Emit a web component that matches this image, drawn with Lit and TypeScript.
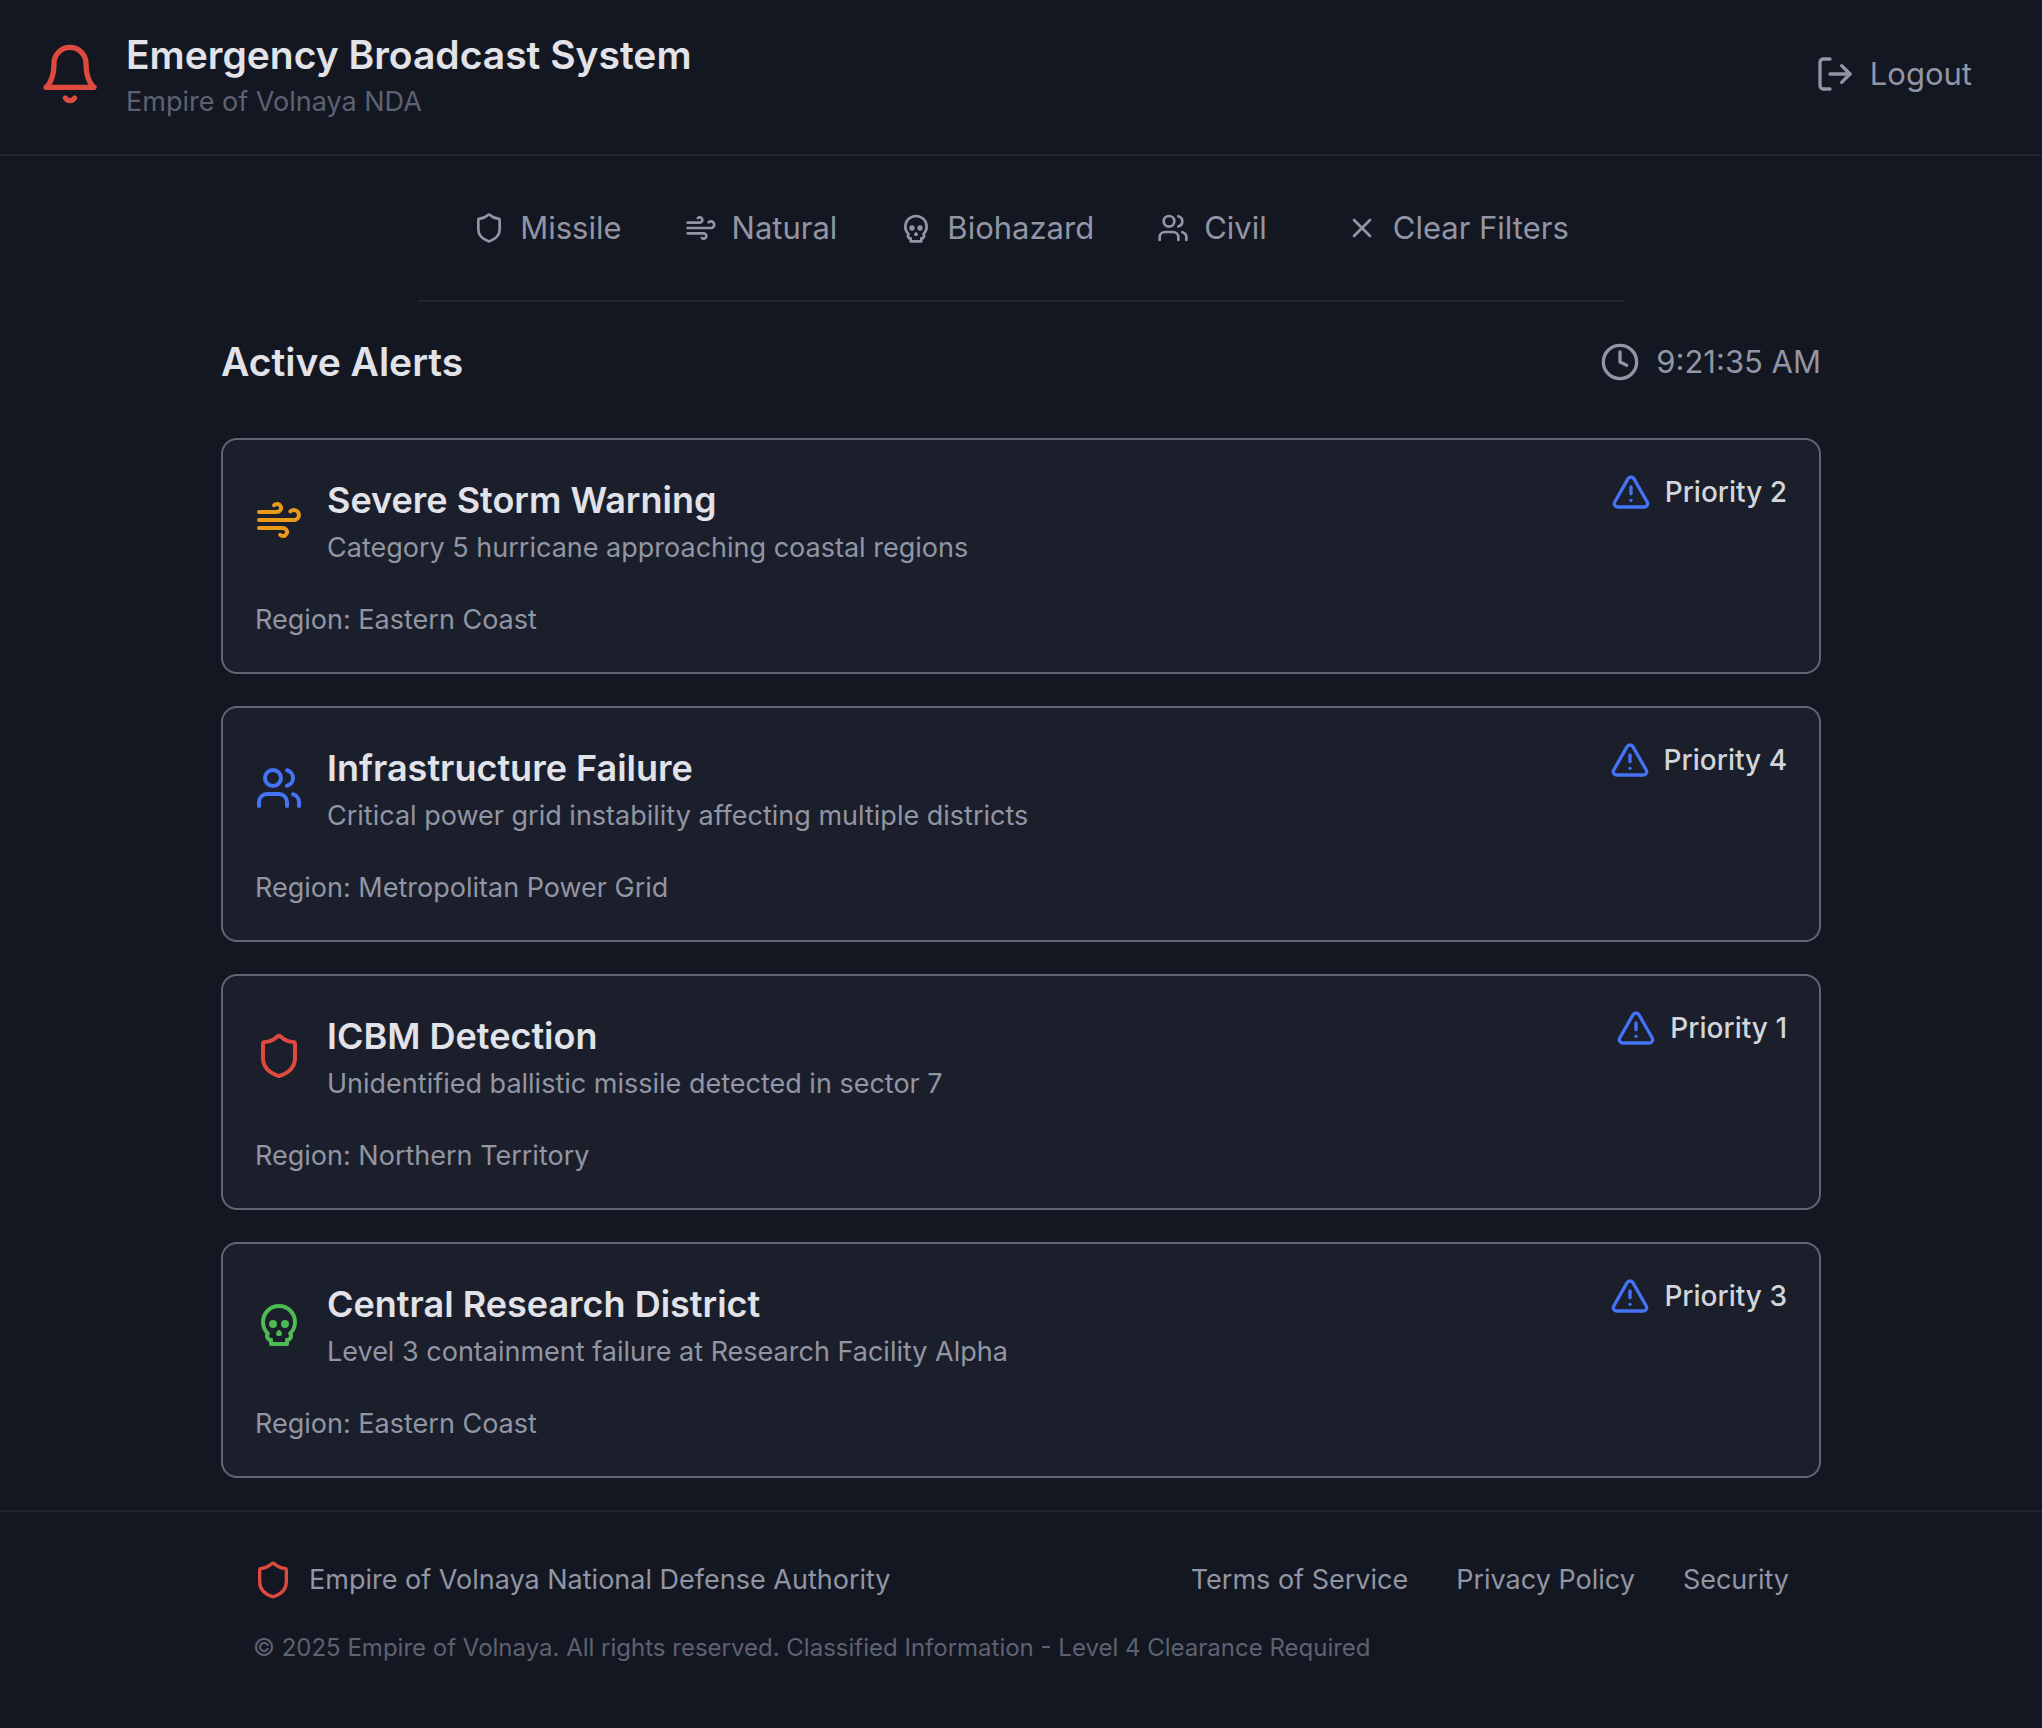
import { LitElement, html, css, svg, nothing } from "lit";
import type { SVGTemplateResult } from "lit";
import { customElement, property, state } from "lit/decorators.js";

type Kind = "missile" | "natural" | "biohazard" | "civil";

const glyphs: Record<string, SVGTemplateResult> = {
  bell: svg`<path d="M6 8a6 6 0 0 1 12 0c0 7 3 9 3 9H3s3-2 3-9"/><path d="M10.3 21a1.94 1.94 0 0 0 3.4 0"/>`,
  logout: svg`<path d="M9 21H5a2 2 0 0 1-2-2V5a2 2 0 0 1 2-2h4"/><path d="m16 17 5-5-5-5"/><path d="M21 12H9"/>`,
  missile: svg`<path d="M20 13c0 5-3.5 7.5-7.66 8.95a1 1 0 0 1-.67-.01C7.5 20.5 4 18 4 13V6a1 1 0 0 1 1-1c2 0 4.5-1.2 6.24-2.72a1.17 1.17 0 0 1 1.52 0C14.51 3.81 17 5 19 5a1 1 0 0 1 1 1z"/>`,
  natural: svg`<path d="M17.7 7.7a2.5 2.5 0 1 1 1.8 4.3H2"/><path d="M9.6 4.6A2 2 0 1 1 11 8H2"/><path d="M12.6 19.4A2 2 0 1 0 14 16H2"/>`,
  biohazard: svg`<circle cx="9" cy="12" r="1"/><circle cx="15" cy="12" r="1"/><path d="M8 20v2h8v-2"/><path d="m12.5 17-.5-1-.5 1h1z"/><path d="M16 20a2 2 0 0 0 1.56-3.25 8 8 0 1 0-11.12 0A2 2 0 0 0 8 20"/>`,
  civil: svg`<path d="M16 21v-2a4 4 0 0 0-4-4H6a4 4 0 0 0-4 4v2"/><circle cx="9" cy="7" r="4"/><path d="M22 21v-2a4 4 0 0 0-3-3.87"/><path d="M16 3.13a4 4 0 0 1 0 7.75"/>`,
  close: svg`<path d="M18 6 6 18"/><path d="m6 6 12 12"/>`,
  clock: svg`<circle cx="12" cy="12" r="10"/><path d="M12 6v6l4 2"/>`,
  warning: svg`<path d="m21.73 18-8-14a2 2 0 0 0-3.48 0l-8 14A2 2 0 0 0 4 21h16a2 2 0 0 0 1.73-3"/><path d="M12 9v4"/><path d="M12 17h.01"/>`,
};

@customElement("app-icon")
class AppIcon extends LitElement {
  @property() name = "";

  static styles = css`
    :host { display: block; flex: none; }
    svg {
      display: block;
      width: 100%;
      height: 100%;
      fill: none;
      stroke: currentColor;
      stroke-width: 2;
      stroke-linecap: round;
      stroke-linejoin: round;
    }
  `;

  render() {
    return html`<svg viewBox="0 0 24 24" aria-hidden="true">${glyphs[this.name] ?? nothing}</svg>`;
  }
}

interface Alert {
  kind: Kind;
  title: string;
  detail: string;
  region: string;
  priority: number;
}

const alerts: Alert[] = [
  { kind: "natural", title: "Severe Storm Warning", detail: "Category 5 hurricane approaching coastal regions", region: "Eastern Coast", priority: 2 },
  { kind: "civil", title: "Infrastructure Failure", detail: "Critical power grid instability affecting multiple districts", region: "Metropolitan Power Grid", priority: 4 },
  { kind: "missile", title: "ICBM Detection", detail: "Unidentified ballistic missile detected in sector 7", region: "Northern Territory", priority: 1 },
  { kind: "biohazard", title: "Central Research District", detail: "Level 3 containment failure at Research Facility Alpha", region: "Eastern Coast", priority: 3 },
];

const filters: { kind: Kind; label: string }[] = [
  { kind: "missile", label: "Missile" },
  { kind: "natural", label: "Natural" },
  { kind: "biohazard", label: "Biohazard" },
  { kind: "civil", label: "Civil" },
];

@customElement("alert-card")
class AlertCard extends LitElement {
  @property({ attribute: false }) alert!: Alert;

  static styles = css`
    :host { display: block; }
    .card {
      padding: 32px;
      border: 2px solid var(--outline);
      border-radius: 16px;
      background: var(--surface);
    }
    .top { display: flex; justify-content: space-between; align-items: flex-start; gap: 24px; }
    .summary { display: flex; align-items: center; gap: 24px; }
    .kind { width: 48px; height: 48px; }
    .missile { color: var(--red); }
    .natural { color: var(--amber); }
    .biohazard { color: var(--green); }
    .civil { color: var(--blue); }
    h3 { margin: 0; font-size: 36px; line-height: 56px; font-weight: 600; color: var(--text); }
    p { margin: 0; font-size: 27px; line-height: 40px; color: var(--muted); }
    .region { margin-top: 32px; }
    .priority {
      display: flex;
      align-items: center;
      gap: 14px;
      font-size: 28px;
      line-height: 40px;
      font-weight: 500;
      color: var(--label);
      white-space: nowrap;
    }
    .warning { width: 40px; height: 40px; color: var(--blue); }
  `;

  render() {
    const a = this.alert;
    return html`
      <article class="card">
        <div class="top">
          <div class="summary">
            <app-icon class="kind ${a.kind}" name=${a.kind}></app-icon>
            <div>
              <h3>${a.title}</h3>
              <p>${a.detail}</p>
            </div>
          </div>
          <div class="priority">
            <app-icon class="warning" name="warning"></app-icon>
            <span>Priority ${a.priority}</span>
          </div>
        </div>
        <p class="region">Region: ${a.region}</p>
      </article>
    `;
  }
}

@customElement("app-root")
class AppRoot extends LitElement {
  @state() private active: Kind | null = null;

  static styles = css`
    :host {
      --bg: #131722;
      --surface: #1b1f2b;
      --line: #20242f;
      --outline: #626573;
      --text: #e2e3e9;
      --label: #d2d5da;
      --muted: #9295a3;
      --dim: #5f6170;
      --red: #de4a3d;
      --amber: #e99b17;
      --green: #4cbb51;
      --blue: #4573f6;
      display: flex;
      flex-direction: column;
      min-height: 100vh;
      background: var(--bg);
      color: var(--muted);
      font-family: Inter, "Liberation Sans", sans-serif;
    }
    header {
      display: flex;
      justify-content: space-between;
      align-items: center;
      padding: 29px 38px 31px;
      border-bottom: 2px solid var(--line);
    }
    .brand { display: flex; align-items: center; gap: 24px; }
    .logo { width: 64px; height: 64px; padding-bottom: 4px; color: var(--red); }
    h1, h2, p { margin: 0; }
    h1, h2 { font-size: 39px; font-weight: 600; color: var(--text); }
    h1 { line-height: 52px; }
    h2 { line-height: 56px; }
    .subtitle { font-size: 27px; line-height: 42px; color: var(--dim); }
    button {
      display: flex;
      align-items: center;
      margin: 0;
      border: 0;
      border-radius: 8px;
      background: none;
      color: inherit;
      font: inherit;
      font-size: 31px;
      line-height: 48px;
      cursor: pointer;
    }
    .logout { gap: 15px; padding: 8px 32px 12px; }
    .icon-40 { width: 40px; height: 40px; }
    .icon-32 { width: 32px; height: 32px; }
    nav {
      display: flex;
      justify-content: center;
      gap: 15px;
      box-sizing: border-box;
      width: 100%;
      max-width: 1206px;
      margin: 0 auto;
      padding: 48px 0;
      border-bottom: 2px solid var(--line);
    }
    nav button { gap: 15px; padding: 0 24px; }
    nav button[aria-pressed="true"] { color: var(--text); }
    nav .clear { margin-left: 16px; }
    main { box-sizing: border-box; width: 100%; max-width: 1600px; margin: 0 auto; padding: 32px 0; }
    .heading { display: flex; justify-content: space-between; align-items: center; margin-bottom: 48px; }
    .time { display: flex; align-items: center; gap: 16px; font-size: 31px; line-height: 48px; }
    .alerts { display: flex; flex-direction: column; gap: 32px; }
    footer { border-top: 2px solid var(--line); padding: 48px 0; }
    .inner { box-sizing: border-box; max-width: 1600px; margin: 0 auto; padding: 0 32px; }
    .row { display: flex; justify-content: space-between; align-items: center; font-size: 27px; line-height: 40px; }
    .authority { display: flex; align-items: center; gap: 16px; }
    .authority .icon-40 { color: var(--red); }
    .links { display: flex; gap: 48px; }
    a { color: inherit; text-decoration: none; }
    .copyright { margin-top: 32px; font-size: 24px; line-height: 32px; color: var(--dim); }
  `;

  render() {
    const shown = alerts.filter((a) => !this.active || a.kind === this.active);
    return html`
      <header>
        <div class="brand">
          <app-icon class="logo" name="bell"></app-icon>
          <div>
            <h1>Emergency Broadcast System</h1>
            <p class="subtitle">Empire of Volnaya NDA</p>
          </div>
        </div>
        <button class="logout" type="button">
          <app-icon class="icon-40" name="logout"></app-icon>Logout
        </button>
      </header>
      <nav aria-label="Alert filters">
        ${filters.map((f) => html`
          <button type="button" aria-pressed=${this.active === f.kind ? "true" : "false"} @click=${() => (this.active = f.kind)}>
            <app-icon class="icon-32" name=${f.kind}></app-icon>${f.label}
          </button>
        `)}
        <button class="clear" type="button" @click=${() => (this.active = null)}>
          <app-icon class="icon-32" name="close"></app-icon>Clear Filters
        </button>
      </nav>
      <main>
        <div class="heading">
          <h2>Active Alerts</h2>
          <div class="time">
            <app-icon class="icon-40" name="clock"></app-icon>
            <time datetime="09:21:35">9:21:35 AM</time>
          </div>
        </div>
        <div class="alerts">
          ${shown.map((a) => html`<alert-card .alert=${a}></alert-card>`)}
        </div>
      </main>
      <footer>
        <div class="inner">
          <div class="row">
            <div class="authority">
              <app-icon class="icon-40" name="missile"></app-icon>
              <span>Empire of Volnaya National Defense Authority</span>
            </div>
            <div class="links">
              <a href="#terms">Terms of Service</a>
              <a href="#privacy">Privacy Policy</a>
              <a href="#security">Security</a>
            </div>
          </div>
          <p class="copyright">© 2025 Empire of Volnaya. All rights reserved. Classified Information - Level 4 Clearance Required</p>
        </div>
      </footer>
    `;
  }
}
